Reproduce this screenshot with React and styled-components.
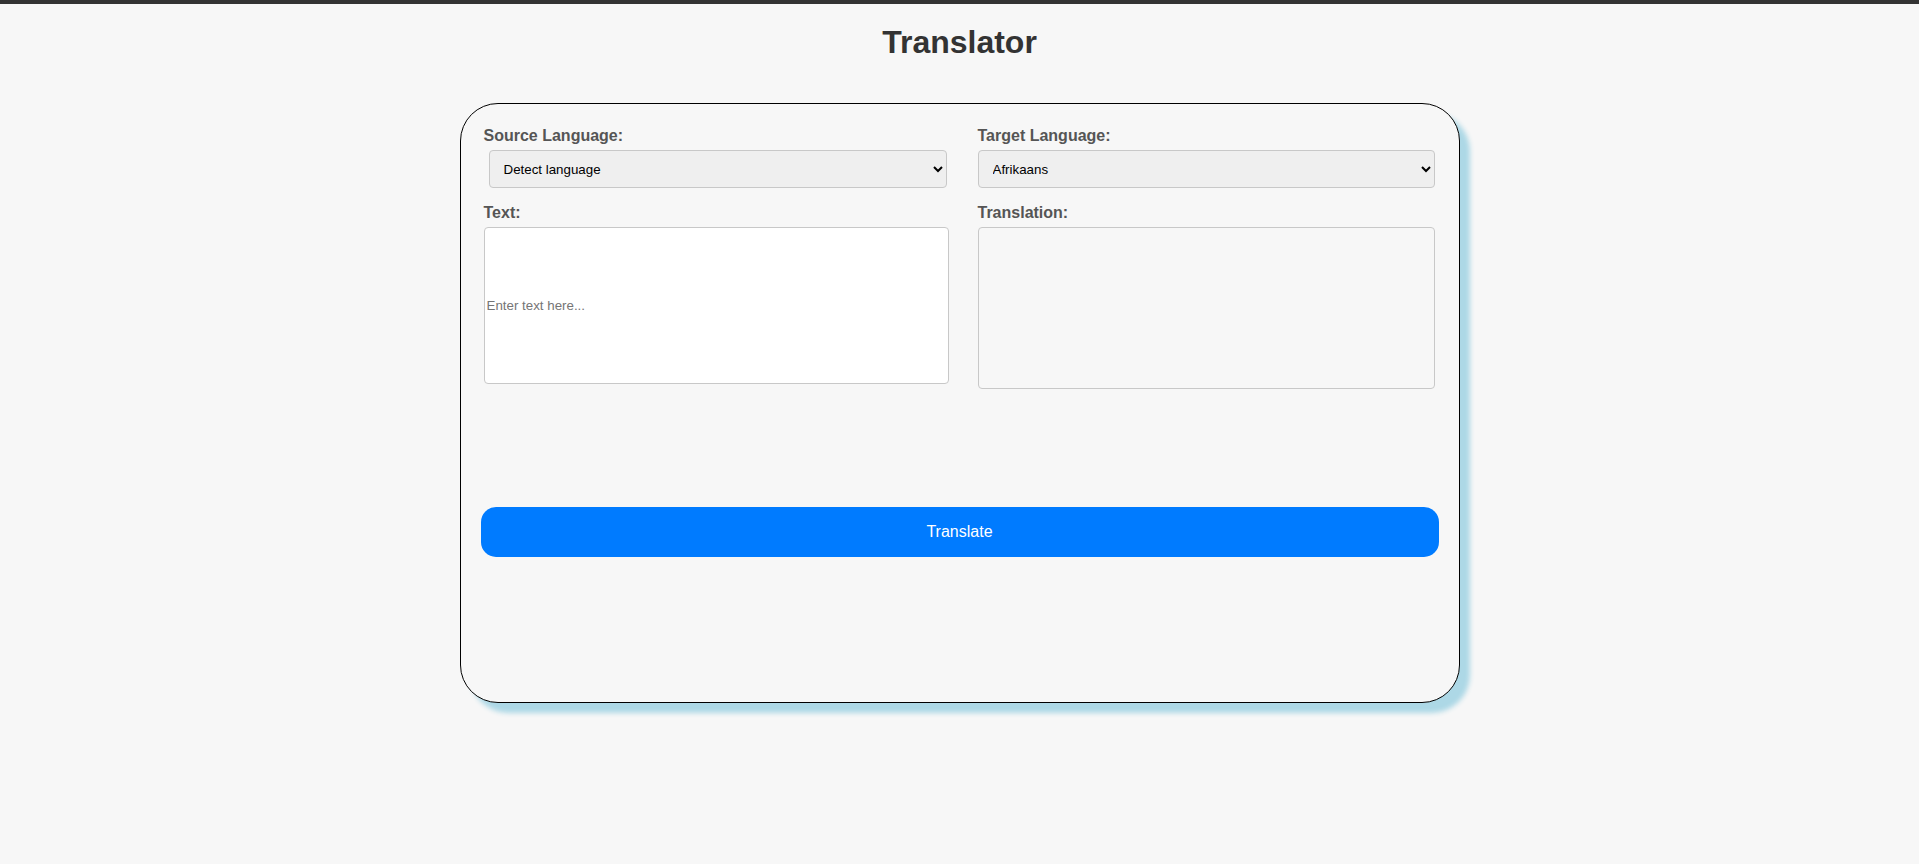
import React, { useState } from 'react';
import styled, { createGlobalStyle } from 'styled-components';

const GlobalStyle = createGlobalStyle`
  html, body {
    margin: 0;
    padding: 0;
    background: #f7f7f7;
    font-family: "Liberation Sans", Arial, sans-serif;
  }
  * {
    box-sizing: border-box;
  }
`;

const TopBar = styled.div`
  height: 4px;
  background: #333;
`;

const Title = styled.h1`
  margin: 20px 0 42px;
  font-size: 32px;
  line-height: 37px;
  font-weight: bold;
  color: #333;
  text-align: center;
`;

const Page = styled.div`
  padding-bottom: 40px;
`;

const Card = styled.div`
  width: 1000px;
  height: 600px;
  margin: 0 auto;
  padding: 23px 20px;
  border: 1px solid #000;
  border-radius: 38px;
  background: #f7f7f7;
  box-shadow: 10px 10px 5px #add8e6;
  display: flex;
  flex-direction: column;
`;

const Row = styled.div`
  display: grid;
  grid-template-columns: 465px 457px;
  column-gap: 29px;
  align-items: start;
  padding-left: 3px;
`;

const Column = styled.div`
  display: flex;
  flex-direction: column;
  align-items: flex-start;
`;

const Label = styled.label`
  display: block;
  font-size: 16px;
  line-height: 18px;
  font-weight: bold;
  color: #555;
  margin-top: ${(p) => (p.$first ? '0' : '16px')};
  margin-bottom: 5px;
`;

const Select = styled.select`
  width: ${(p) => p.$width}px;
  height: 38px;
  margin-left: ${(p) => p.$offset || 0}px;
  padding: 0 2px 0 10px;
  border: 1px solid #c8c8c8;
  border-radius: 4px;
  background: #efefef;
  color: #000;
  font-family: "Liberation Sans", Arial, sans-serif;
  font-size: 13.333px;
`;

const TextInput = styled.input`
  width: 465px;
  height: 157px;
  padding: 1px 2px;
  border: 1px solid #c8c8c8;
  border-radius: 4px;
  background: #fff;
  font-family: "Liberation Sans", Arial, sans-serif;
  font-size: 13.333px;
  color: #000;

  &::placeholder {
    color: #757575;
  }
`;

const Output = styled.div`
  width: 457px;
  height: 162px;
  border: 1px solid #c8c8c8;
  border-radius: 4px;
  background: #f7f7f7;
  font-size: 13.333px;
  padding: 2px;
`;

const TranslateButton = styled.button`
  width: 100%;
  height: 50px;
  margin-top: 118px;
  border: none;
  border-radius: 15px;
  background: #007bff;
  color: #fff;
  font-family: "Liberation Sans", Arial, sans-serif;
  font-size: 16px;
  cursor: pointer;
`;

const languages = ['Afrikaans', 'Albanian', 'Arabic', 'Chinese', 'English', 'French', 'German', 'Spanish'];

const App = () => {
  const [source, setSource] = useState('auto');
  const [target, setTarget] = useState('Afrikaans');
  const [text, setText] = useState('');
  const [translation] = useState('');

  return (
    <Page>
      <GlobalStyle />
      <TopBar />
      <Title>Translator</Title>
      <Card>
        <Row>
          <Column>
            <Label $first>Source Language:</Label>
            <Select $width={458} $offset={5} value={source} onChange={(e) => setSource(e.target.value)}>
              <option value="auto">Detect language</option>
              {languages.map((l) => (
                <option key={l} value={l}>{l}</option>
              ))}
            </Select>
            <Label>Text:</Label>
            <TextInput
              type="text"
              placeholder="Enter text here..."
              value={text}
              onChange={(e) => setText(e.target.value)}
            />
          </Column>
          <Column>
            <Label $first>Target Language:</Label>
            <Select $width={457} value={target} onChange={(e) => setTarget(e.target.value)}>
              {languages.map((l) => (
                <option key={l} value={l}>{l}</option>
              ))}
            </Select>
            <Label>Translation:</Label>
            <Output>{translation}</Output>
          </Column>
        </Row>
        <TranslateButton type="button">Translate</TranslateButton>
      </Card>
    </Page>
  );
};

export default App;
